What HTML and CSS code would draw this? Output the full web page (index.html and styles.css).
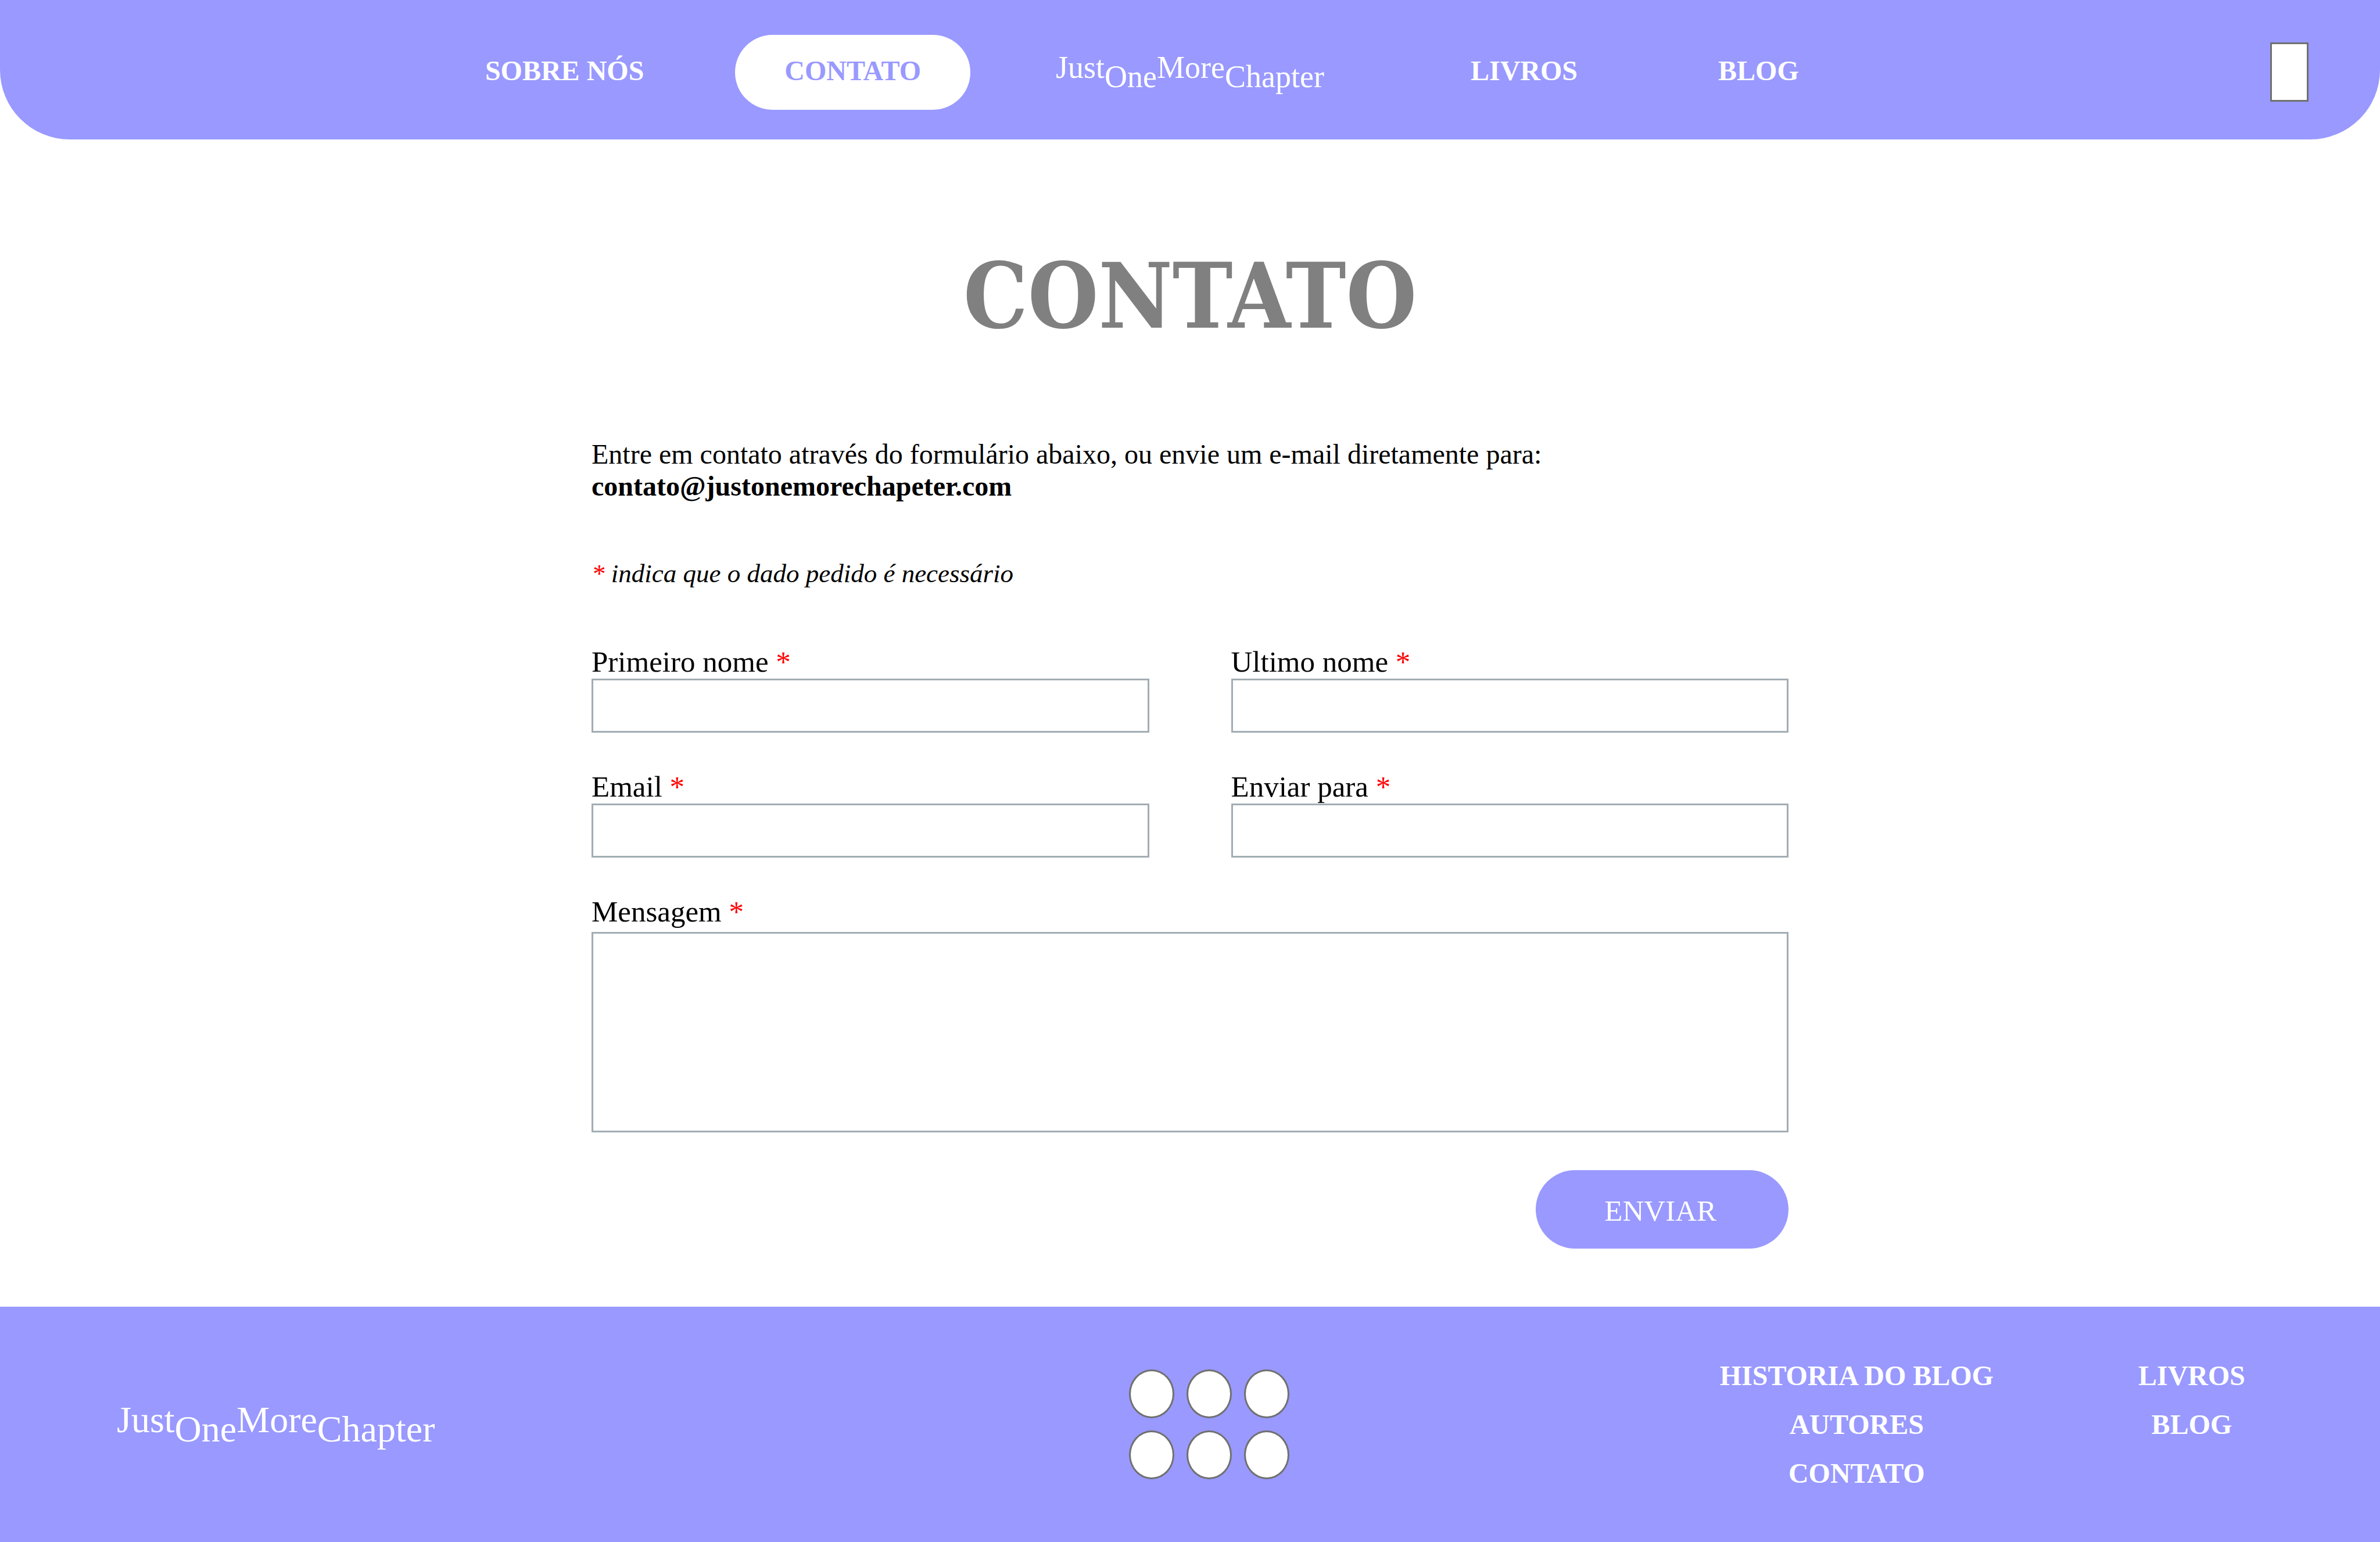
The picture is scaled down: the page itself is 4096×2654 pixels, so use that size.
FILE: index.html
```html
<!DOCTYPE html>
<html lang="pt-BR">
<head>
  <meta charset="utf-8">
  <meta name="viewport" content="width=device-width, initial-scale=1">
  <title>Contato - JustOneMoreChapter</title>
  <link rel="stylesheet" href="styles.css">
</head>
<body>
  <header class="header">
    <nav class="nav nav-left" aria-label="Institucional">
      <a class="nav-link" href="#sobre">SOBRE NÓS</a>
      <a class="nav-link active" href="#contato" aria-current="page">CONTATO</a>
    </nav>
    <a class="logo" href="#inicio"><span>Just</span><span class="low">One</span><span>More</span><span class="low">Chapter</span></a>
    <div class="header-right">
      <nav class="nav" aria-label="Conteúdo">
        <a class="nav-link" href="#livros">LIVROS</a>
        <a class="nav-link" href="#blog">BLOG</a>
      </nav>
      <button class="menu-button" type="button" aria-label="Menu"></button>
    </div>
  </header>

  <main class="main">
    <h1 class="title">CONTATO</h1>
    <p class="intro">Entre em contato através do formulário abaixo, ou envie um e-mail diretamente para:<br><strong>contato@justonemorechapeter.com</strong></p>
    <p class="note"><span class="mark">*</span> indica que o dado pedido é necessário</p>
    <form class="form">
      <div class="field">
        <label for="nome">Primeiro nome <span class="mark">*</span></label>
        <input id="nome" type="text">
      </div>
      <div class="field">
        <label for="sobrenome">Ultimo nome <span class="mark">*</span></label>
        <input id="sobrenome" type="text">
      </div>
      <div class="field">
        <label for="email">Email <span class="mark">*</span></label>
        <input id="email" type="email">
      </div>
      <div class="field">
        <label for="destino">Enviar para <span class="mark">*</span></label>
        <input id="destino" type="text">
      </div>
      <div class="field field-wide">
        <label for="mensagem">Mensagem <span class="mark">*</span></label>
        <textarea id="mensagem"></textarea>
      </div>
      <button class="submit" type="submit">ENVIAR</button>
    </form>
  </main>

  <footer class="footer">
    <a class="logo logo-large" href="#inicio"><span>Just</span><span class="low">One</span><span>More</span><span class="low">Chapter</span></a>
    <div class="social">
      <a href="#rede-1" aria-label="Rede social 1"></a>
      <a href="#rede-2" aria-label="Rede social 2"></a>
      <a href="#rede-3" aria-label="Rede social 3"></a>
      <a href="#rede-4" aria-label="Rede social 4"></a>
      <a href="#rede-5" aria-label="Rede social 5"></a>
      <a href="#rede-6" aria-label="Rede social 6"></a>
    </div>
    <nav class="footer-links" aria-label="Rodapé">
      <div class="footer-column">
        <a href="#historia">HISTORIA DO BLOG</a>
        <a href="#autores">AUTORES</a>
        <a href="#contato">CONTATO</a>
      </div>
      <div class="footer-column">
        <a href="#livros">LIVROS</a>
        <a href="#blog">BLOG</a>
      </div>
    </nav>
  </footer>
</body>
</html>
```
FILE: styles.css
```css
* {
  box-sizing: border-box;
}

body {
  display: flex;
  flex-direction: column;
  min-height: 100vh;
  margin: 0;
  background: #fff;
  color: #000;
  font-family: "Liberation Serif", "Times New Roman", serif;
  font-size: 48px;
  line-height: 55px;
}

a {
  color: inherit;
  text-decoration: none;
}

p {
  margin: 0;
}

/* Header */

.header {
  display: grid;
  grid-template-columns: 1fr auto 1fr;
  align-items: center;
  height: 240px;
  padding-top: 8px;
  background: #9999ff;
  color: #fff;
  border-radius: 0 0 120px 120px;
}

.nav {
  display: flex;
  gap: 72px;
  font-weight: bold;
}

.nav-left {
  justify-content: flex-end;
  margin-right: 147px;
}

.nav-link {
  padding: 34px 85px 40px;
  border-radius: 65px;
  white-space: nowrap;
}

.nav-link.active {
  background: #fff;
  color: #9999ff;
}

.header-right {
  display: flex;
  align-items: center;
  justify-content: space-between;
  margin-left: 167px;
  padding-right: 123px;
}

.menu-button {
  width: 66px;
  height: 102px;
  padding: 0;
  background: #fff;
  border: 3px solid #707070;
}

.logo {
  display: flex;
  align-items: flex-start;
  font-size: 54px;
  line-height: 60px;
}

.logo-large {
  font-size: 64px;
  line-height: 72px;
}

.logo .low {
  padding-top: 16px;
}

/* Contact form */

.main {
  flex: 1;
  width: 100%;
  max-width: 2060px;
  margin: 0 auto;
  padding: 153px 0 99px;
}

.title {
  margin: 0 0 127px;
  color: #808080;
  font-family: "DejaVu Serif Condensed", "DejaVu Serif", serif;
  font-size: 155px;
  font-weight: bold;
  line-height: 234px;
  text-align: center;
}

.note {
  margin: 98px 0;
  font-size: 45px;
  font-style: italic;
  line-height: 51px;
}

.mark {
  color: #f00;
}

.form {
  display: grid;
  grid-template-columns: 1fr 1fr;
  gap: 65px 141px;
}

.field {
  display: flex;
  flex-direction: column;
  font-size: 51px;
  line-height: 57px;
}

.field-wide {
  grid-column: 1 / -1;
  gap: 6px;
}

.field input,
.field textarea {
  width: 100%;
  margin: 0;
  padding: 12px;
  background: #fff;
  border: 3px solid #a2adb4;
  border-radius: 0;
  font: inherit;
}

.field input {
  height: 93px;
}

.field textarea {
  height: 345px;
  resize: none;
}

.submit {
  grid-column: 1 / -1;
  justify-self: end;
  padding: 42px 124px 36px 118px;
  background: #9999ff;
  border: 0;
  border-radius: 68px;
  color: #fff;
  font-family: inherit;
  font-size: 51px;
  line-height: 57px;
}

/* Footer */

.footer {
  display: grid;
  grid-template-columns: 1742fr 1016fr auto;
  align-items: center;
  padding: 91px 232px 91px 201px;
  background: #9999ff;
  color: #fff;
}

.social {
  display: grid;
  grid-template-columns: repeat(3, 78px);
  gap: 21px;
}

.social a {
  height: 84px;
  background: #fff;
  border: 3px solid #707070;
  border-radius: 50%;
}

.footer-links {
  display: flex;
  gap: 249px;
  font-weight: bold;
}

.footer-column {
  display: flex;
  flex-direction: column;
  align-items: center;
  gap: 29px;
}
```
